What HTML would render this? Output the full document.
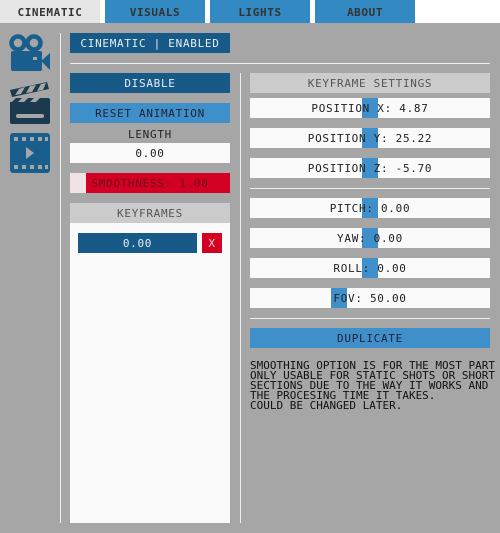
<!DOCTYPE html>
<html><head><style>
*{margin:0;padding:0;box-sizing:border-box}
body{width:500px;height:533px;background:#a6a6a6;position:relative;overflow:hidden;font-family:"DejaVu Sans Mono","Liberation Mono",monospace;font-size:11px;color:#222}
.a{position:absolute}
.tabs{left:0;top:0;width:500px;height:23px;background:#fff}
.tab{position:absolute;top:0;height:23px;width:100px;background:#3389c2;text-align:center;line-height:25px;font-weight:bold;color:#333;font-size:11px;letter-spacing:0.6px}
.b{position:absolute;height:20px;line-height:22px;text-align:center;letter-spacing:0.7px}
.dk{background:#175a87;color:#e8eef4}
.lt{background:#3f8fca;color:#223}
.wh{background:#fafafa}
.hd{background:#cbcbcb;color:#555}
.ln{position:absolute;background:#eee}
.thumb{position:absolute;top:0;width:16px;height:20px;background:#3f8fca}
.txt{position:relative}
</style></head><body>
<div class="a tabs">
<div class="tab" style="left:0;background:#e6e6e6">CINEMATIC</div>
<div class="tab" style="left:105px">VISUALS</div>
<div class="tab" style="left:210px">LIGHTS</div>
<div class="tab" style="left:315px">ABOUT</div>
</div>
<svg class="a" style="left:8px;top:33px" width="46" height="145" viewBox="0 0 46 145">
<g fill="#1a5e8e">
<circle cx="10" cy="10" r="6.5" fill="none" stroke="#1a5e8e" stroke-width="4.5"/>
<circle cx="26" cy="10" r="6.5" fill="none" stroke="#1a5e8e" stroke-width="4.5"/>
<rect x="3" y="18" width="31" height="20" rx="2"/>
<path d="M33 28 L42 20 L42 37 Z"/>
</g>
<rect x="25" y="24" width="4" height="3" fill="#a6a6a6"/>
<g fill="#1b3a4d">
<rect x="2" y="65" width="40" height="26" rx="2"/>
<path d="M2 57 L39 49 L41 56 L4 64 Z"/>
</g>
<g fill="#a6a6a6">
<path d="M11 56 L17 54 L13 61 L7 62Z M22 53 L28 52 L24 59 L18 60Z M33 51 L38 50 L35 57 L29 58Z"/>
<path d="M2 65 L8 65 L4 69 L2 69Z M14 65 L20 65 L16 69 L10 69Z M26 65 L32 65 L28 69 L22 69Z"/>
<rect x="8" y="81" width="28" height="4" rx="2"/>
</g>
<rect x="2" y="100" width="40" height="40" rx="3" fill="#1a5e8e"/>
<g fill="#a6a6a6">
<rect x="6" y="104" width="4" height="4"/><rect x="14" y="104" width="4" height="4"/><rect x="22" y="104" width="4" height="4"/><rect x="30" y="104" width="4" height="4"/><rect x="37" y="104" width="3" height="4"/>
<rect x="6" y="132" width="4" height="4"/><rect x="14" y="132" width="4" height="4"/><rect x="22" y="132" width="4" height="4"/><rect x="30" y="132" width="4" height="4"/><rect x="37" y="132" width="3" height="4"/>
<path d="M18 114 L26 120 L18 126Z"/>
</g>
</svg>
<div class="ln" style="left:60px;top:33px;width:1px;height:490px"></div>
<div class="b dk" style="left:70px;top:33px;width:160px">CINEMATIC | ENABLED</div>
<div class="ln" style="left:70px;top:63px;width:420px;height:1px"></div>
<div class="b dk" style="left:70px;top:73px;width:160px">DISABLE</div>
<div class="b lt" style="left:70px;top:103px;width:160px">RESET ANIMATION</div>
<div class="b" style="left:70px;top:124px;width:160px">LENGTH</div>
<div class="b wh" style="left:70px;top:143px;width:160px">0.00</div>
<div class="b" style="left:70px;top:173px;width:160px;background:#d40024;color:#6a0a18"><div class="a" style="left:0;top:0;width:16px;height:20px;background:#f0e2e5"></div><span class="txt">SMOOTHNESS: 1.00</span></div>
<div class="a" style="left:70px;top:203px;width:160px;height:320px;background:#fafafa"></div>
<div class="b hd" style="left:70px;top:203px;width:160px">KEYFRAMES</div>
<div class="b dk" style="left:78px;top:233px;width:119px">0.00</div>
<div class="b" style="left:202px;top:233px;width:20px;background:#d40024;color:#f4d0d6">X</div>
<div class="ln" style="left:240px;top:73px;width:1px;height:450px"></div>
<div class="b hd" style="left:250px;top:73px;width:240px">KEYFRAME SETTINGS</div>
<div class="b wh" style="left:250px;top:98px;width:240px"><div class="thumb" style="left:112px"></div><span class="txt">POSITION X: 4.87</span></div>
<div class="b wh" style="left:250px;top:128px;width:240px"><div class="thumb" style="left:112px"></div><span class="txt">POSITION Y: 25.22</span></div>
<div class="b wh" style="left:250px;top:158px;width:240px"><div class="thumb" style="left:112px"></div><span class="txt">POSITION Z: -5.70</span></div>
<div class="ln" style="left:250px;top:188px;width:240px;height:1px"></div>
<div class="b wh" style="left:250px;top:198px;width:240px"><div class="thumb" style="left:112px"></div><span class="txt">PITCH: 0.00</span></div>
<div class="b wh" style="left:250px;top:228px;width:240px"><div class="thumb" style="left:112px"></div><span class="txt">YAW: 0.00</span></div>
<div class="b wh" style="left:250px;top:258px;width:240px"><div class="thumb" style="left:112px"></div><span class="txt">ROLL: 0.00</span></div>
<div class="b wh" style="left:250px;top:288px;width:240px"><div class="thumb" style="left:81px"></div><span class="txt">FOV: 50.00</span></div>
<div class="ln" style="left:250px;top:318px;width:240px;height:1px"></div>
<div class="b lt" style="left:250px;top:328px;width:240px">DUPLICATE</div>
<div class="a" style="left:250px;top:361px;width:250px;line-height:10px;font-size:11px;color:#111;white-space:pre">SMOOTHING OPTION IS FOR THE MOST PART
ONLY USABLE FOR STATIC SHOTS OR SHORT
SECTIONS DUE TO THE WAY IT WORKS AND
THE PROCESING TIME IT TAKES.
COULD BE CHANGED LATER.</div>
</body></html>
